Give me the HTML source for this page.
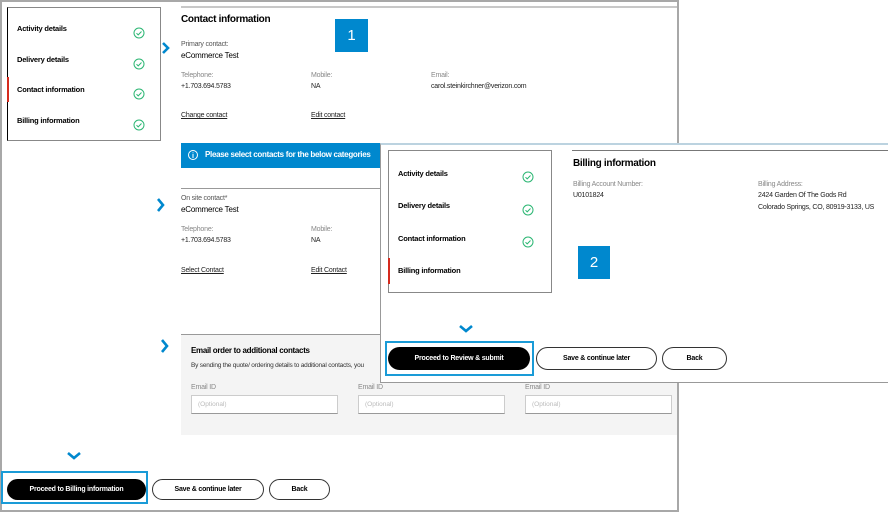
<!DOCTYPE html>
<html><head><meta charset="utf-8"><style>
*{margin:0;padding:0;box-sizing:border-box}
body{width:888px;height:508px;position:relative;background:#fff;font-family:"Liberation Sans",Arial,sans-serif;color:#000;overflow:hidden}
.a{position:absolute;white-space:nowrap}
.b{font-weight:bold}
.lab{font-size:7px;color:#888;letter-spacing:-.2px}
.val{font-size:7px;color:#222;letter-spacing:-.2px}
.lnk{font-size:7px;color:#222;text-decoration:underline;letter-spacing:-.2px}
.si{font-size:7.5px;font-weight:bold;letter-spacing:-.2px}
.pill{position:absolute;border-radius:12px;font-size:7px;font-weight:bold;display:flex;align-items:center;justify-content:center;letter-spacing:-.2px}
.blk{background:#000;color:#fff}
.wht{border:1px solid #333;background:#fff;color:#000}
.hl{position:absolute;border:2px solid #1a9bd7}
.chk{position:absolute;width:12px;height:12px}
.nb{position:absolute;background:#0088ce;color:#fff;font-size:15px;display:flex;align-items:center;justify-content:center}
</style></head><body>
<div class="a" style="left:0;top:0;width:679px;height:512px;border:2px solid #a8a8a8"></div>
<div class="a" style="left:181px;top:6px;width:496px;height:2px;background:#c8c8c8"></div>

<div class="a" style="left:7px;top:7px;width:154px;height:134px;border:1px solid #888;border-left:1px solid #000"></div>
<div class="a" style="left:7px;top:77px;width:2px;height:25px;background:#d52b1e"></div>
<div class="a si" style="left:17px;top:24px">Activity details</div>
<div class="a si" style="left:17px;top:55px">Delivery details</div>
<div class="a si" style="left:17px;top:85px">Contact information</div>
<div class="a si" style="left:17px;top:116px">Billing information</div>
<svg class="chk" style="left:133px;top:27px" viewBox="0 0 12 12"><circle cx="6" cy="6" r="5" fill="none" stroke="#2bb673" stroke-width="1"/><path d="M3.5 6.2l1.7 1.7 3.3-3.4" fill="none" stroke="#2bb673" stroke-width="1"/></svg>
<svg class="chk" style="left:133px;top:58px" viewBox="0 0 12 12"><circle cx="6" cy="6" r="5" fill="none" stroke="#2bb673" stroke-width="1"/><path d="M3.5 6.2l1.7 1.7 3.3-3.4" fill="none" stroke="#2bb673" stroke-width="1"/></svg>
<svg class="chk" style="left:133px;top:88px" viewBox="0 0 12 12"><circle cx="6" cy="6" r="5" fill="none" stroke="#2bb673" stroke-width="1"/><path d="M3.5 6.2l1.7 1.7 3.3-3.4" fill="none" stroke="#2bb673" stroke-width="1"/></svg>
<svg class="chk" style="left:133px;top:119px" viewBox="0 0 12 12"><circle cx="6" cy="6" r="5" fill="none" stroke="#2bb673" stroke-width="1"/><path d="M3.5 6.2l1.7 1.7 3.3-3.4" fill="none" stroke="#2bb673" stroke-width="1"/></svg>

<div class="a b" style="left:181px;top:14px;font-size:10px;letter-spacing:-.3px">Contact information</div>
<div class="nb" style="left:335px;top:19px;width:33px;height:33px">1</div>
<svg class="a" style="left:160px;top:41px" width="12" height="14"><path d="M3 2l5 5-5 5" fill="none" stroke="#0088ce" stroke-width="2.6"/></svg>
<div class="a lab" style="left:181px;top:41px;color:#555">Primary contact:</div>
<div class="a" style="left:181px;top:51px;font-size:8px;letter-spacing:-.2px">eCommerce Test</div>
<div class="a lab" style="left:181px;top:72px">Telephone:</div><div class="a val" style="left:181px;top:83px">+1.703.694.5783</div>
<div class="a lab" style="left:311px;top:72px">Mobile:</div><div class="a val" style="left:311px;top:83px">NA</div>
<div class="a lab" style="left:431px;top:72px">Email:</div><div class="a val" style="left:431px;top:83px">carol.steinkirchner@verizon.com</div>
<div class="a lnk" style="left:181px;top:112px">Change contact</div>
<div class="a lnk" style="left:311px;top:112px">Edit contact</div>

<div class="a" style="left:181px;top:143px;width:200px;height:25px;background:#0088ce"></div>
<svg class="a" style="left:187px;top:149px" width="12" height="12"><circle cx="6" cy="6" r="4.5" fill="none" stroke="#fff" stroke-width="1"/><path d="M6 5v4M6 3.4v.8" stroke="#fff" stroke-width="1"/></svg>
<div class="a b" style="left:205px;top:150px;font-size:8px;color:#fff;letter-spacing:-.3px">Please select contacts for the below categories</div>

<div class="a" style="left:181px;top:188px;width:200px;height:1px;background:#999"></div>
<svg class="a" style="left:155px;top:197px" width="12" height="16"><path d="M3 2l5 6-5 6" fill="none" stroke="#0088ce" stroke-width="2.6"/></svg>
<div class="a lab" style="left:181px;top:195px;color:#555">On site contact*</div>
<div class="a" style="left:181px;top:205px;font-size:8px;letter-spacing:-.2px">eCommerce Test</div>
<div class="a lab" style="left:181px;top:226px">Telephone:</div><div class="a val" style="left:181px;top:237px">+1.703.694.5783</div>
<div class="a lab" style="left:311px;top:226px">Mobile:</div><div class="a val" style="left:311px;top:237px">NA</div>
<div class="a lnk" style="left:181px;top:267px">Select Contact</div>
<div class="a lnk" style="left:311px;top:267px">Edit Contact</div>

<div class="a" style="left:181px;top:334px;width:496px;height:101px;background:#f4f4f4;border-top:1px solid #999"></div>
<svg class="a" style="left:159px;top:338px" width="12" height="16"><path d="M3 2l5 6-5 6" fill="none" stroke="#0088ce" stroke-width="2.6"/></svg>
<div class="a b" style="left:191px;top:346px;font-size:8px;letter-spacing:-.3px">Email order to additional contacts</div>
<div class="a" style="left:191px;top:362px;font-size:6.5px;color:#333;letter-spacing:-.2px">By sending the quote/ ordering details to additional contacts, you</div>
<div class="a lab" style="left:191px;top:384px">Email ID</div>
<div class="a lab" style="left:358px;top:384px">Email ID</div>
<div class="a lab" style="left:525px;top:384px">Email ID</div>
<div class="a" style="left:191px;top:395px;width:147px;height:19px;background:#fff;border:1px solid #ccc;border-bottom-color:#999;font-size:6.5px;color:#bbb;padding:5px 6px">(Optional)</div>
<div class="a" style="left:358px;top:395px;width:147px;height:19px;background:#fff;border:1px solid #ccc;border-bottom-color:#999;font-size:6.5px;color:#bbb;padding:5px 6px">(Optional)</div>
<div class="a" style="left:525px;top:395px;width:147px;height:19px;background:#fff;border:1px solid #ccc;border-bottom-color:#999;font-size:6.5px;color:#bbb;padding:5px 6px">(Optional)</div>

<svg class="a" style="left:66px;top:451px" width="16" height="10"><path d="M2 2l6 5 6-5" fill="none" stroke="#0088ce" stroke-width="2.6"/></svg>
<div class="hl" style="left:1px;top:471px;width:147px;height:33px"></div>
<div class="pill blk" style="left:7px;top:479px;width:139px;height:21px">Proceed to Billing information</div>
<div class="pill wht" style="left:152px;top:479px;width:112px;height:21px">Save &amp; continue later</div>
<div class="pill wht" style="left:269px;top:479px;width:61px;height:21px">Back</div>

<div class="a" style="left:380px;top:143px;width:510px;height:240px;background:#fff;border:1px solid #999;border-top:2px solid #bcd3e0"></div>
<div class="a" style="left:572px;top:150px;width:316px;height:1px;background:#777"></div>
<div class="a" style="left:388px;top:150px;width:164px;height:143px;border:1px solid #888"></div>
<div class="a" style="left:388px;top:258px;width:2px;height:26px;background:#d52b1e"></div>
<div class="a si" style="left:398px;top:169px">Activity details</div>
<div class="a si" style="left:398px;top:201px">Delivery details</div>
<div class="a si" style="left:398px;top:234px">Contact information</div>
<div class="a si" style="left:398px;top:266px">Billing information</div>
<svg class="chk" style="left:522px;top:171px" viewBox="0 0 12 12"><circle cx="6" cy="6" r="5" fill="none" stroke="#2bb673" stroke-width="1"/><path d="M3.5 6.2l1.7 1.7 3.3-3.4" fill="none" stroke="#2bb673" stroke-width="1"/></svg>
<svg class="chk" style="left:522px;top:204px" viewBox="0 0 12 12"><circle cx="6" cy="6" r="5" fill="none" stroke="#2bb673" stroke-width="1"/><path d="M3.5 6.2l1.7 1.7 3.3-3.4" fill="none" stroke="#2bb673" stroke-width="1"/></svg>
<svg class="chk" style="left:522px;top:236px" viewBox="0 0 12 12"><circle cx="6" cy="6" r="5" fill="none" stroke="#2bb673" stroke-width="1"/><path d="M3.5 6.2l1.7 1.7 3.3-3.4" fill="none" stroke="#2bb673" stroke-width="1"/></svg>
<div class="a b" style="left:573px;top:158px;font-size:10px;letter-spacing:-.3px">Billing information</div>
<div class="a lab" style="left:573px;top:181px">Billing Account Number:</div>
<div class="a val" style="left:573px;top:192px">U0101824</div>
<div class="a lab" style="left:758px;top:181px">Billing Address:</div>
<div class="a val" style="left:758px;top:192px">2424 Garden Of The Gods Rd</div>
<div class="a val" style="left:758px;top:204px">Colorado Springs, CO, 80919-3133, US</div>
<div class="nb" style="left:578px;top:246px;width:32px;height:33px">2</div>
<svg class="a" style="left:458px;top:324px" width="16" height="10"><path d="M2 2l6 5 6-5" fill="none" stroke="#0088ce" stroke-width="2.6"/></svg>
<div class="hl" style="left:385px;top:341px;width:149px;height:35px"></div>
<div class="pill blk" style="left:388px;top:347px;width:142px;height:23px">Proceed to Review &amp; submit</div>
<div class="pill wht" style="left:536px;top:347px;width:121px;height:23px">Save &amp; continue later</div>
<div class="pill wht" style="left:662px;top:347px;width:65px;height:23px">Back</div>
</body></html>
